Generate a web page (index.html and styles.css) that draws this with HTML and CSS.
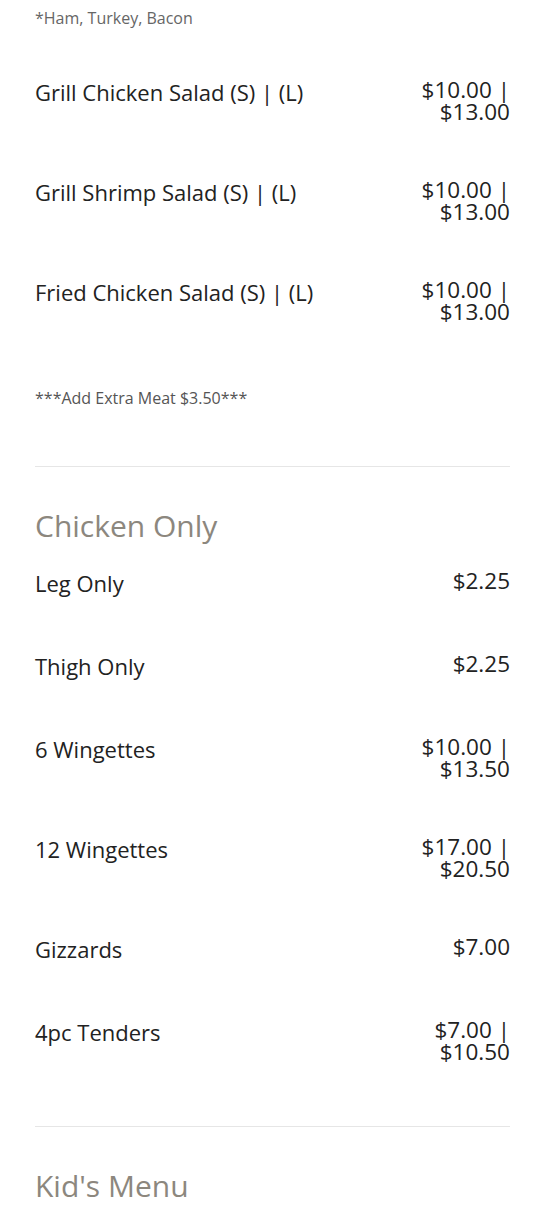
FILE: index.html
```html
<!DOCTYPE html>
<html lang="en">
<head>
  <meta charset="UTF-8" />
  <meta name="viewport" content="width=device-width, initial-scale=1.0"/>
  <title>Menu</title>
  <link rel="stylesheet" href="styles.css">
</head>
<body>
  <main class="menu">
    <section class="menu-section">
      <div class="item has-desc">
        <div class="item-info">
          <div class="item-name">Chef Salad</div>
          <div class="item-desc">*Ham, Turkey, Bacon</div>
        </div>
        <div class="item-price">$10.00</div>
      </div>
      <div class="item">
        <div class="item-name">Grill Chicken Salad (S) | (L)</div>
        <div class="item-price">$10.00 | $13.00</div>
      </div>
      <div class="item">
        <div class="item-name">Grill Shrimp Salad (S) | (L)</div>
        <div class="item-price">$10.00 | $13.00</div>
      </div>
      <div class="item">
        <div class="item-name">Fried Chicken Salad (S) | (L)</div>
        <div class="item-price">$10.00 | $13.00</div>
      </div>
      <p class="section-note">***Add Extra Meat $3.50***</p>
    </section>

    <hr>

    <section class="menu-section">
      <h2>Chicken Only</h2>
      <div class="item">
        <div class="item-name">Leg Only</div>
        <div class="item-price">$2.25</div>
      </div>
      <div class="item">
        <div class="item-name">Thigh Only</div>
        <div class="item-price">$2.25</div>
      </div>
      <div class="item">
        <div class="item-name">6 Wingettes</div>
        <div class="item-price">$10.00 | $13.50</div>
      </div>
      <div class="item">
        <div class="item-name">12 Wingettes</div>
        <div class="item-price">$17.00 | $20.50</div>
      </div>
      <div class="item">
        <div class="item-name">Gizzards</div>
        <div class="item-price">$7.00</div>
      </div>
      <div class="item">
        <div class="item-name">4pc Tenders</div>
        <div class="item-price">$7.00 | $10.50</div>
      </div>
    </section>

    <hr>

    <section class="menu-section">
      <h2>Kid's Menu</h2>
    </section>
  </main>
</body>
</html>
```

FILE: styles.css
```css
body {
  font-family: 'Open Sans', 'Liberation Sans', sans-serif;
  background: #ffffff;
  color: #222222;
  margin: 0;
  padding: 0;
  overflow: hidden;
}
.menu {
  padding: 0 35px;
  margin-top: -22px;
}
.item {
  display: flex;
  justify-content: space-between;
  align-items: flex-start;
  gap: 20px;
  padding-bottom: 56px;
}
.item.has-desc {
  padding-bottom: 50px;
}
.item-name {
  font-size: 22px;
  line-height: 27px;
}
.item-desc {
  font-size: 16px;
  line-height: 22px;
  margin-top: 2px;
  color: #666666;
}
.item-price {
  flex: 0 0 100px;
  font-size: 22.5px;
  line-height: 22px;
  text-align: right;
}
.section-note {
  font-size: 16px;
  line-height: 22px;
  color: #555555;
  margin: 8px 0 57px;
}
hr {
  border: 0;
  border-top: 1px solid #e6e6e6;
  margin: 7px 0 41px;
}
h2 {
  font-size: 30px;
  line-height: 36px;
  font-weight: 400;
  color: #8c877e;
  margin: 0 0 26px;
}
```
